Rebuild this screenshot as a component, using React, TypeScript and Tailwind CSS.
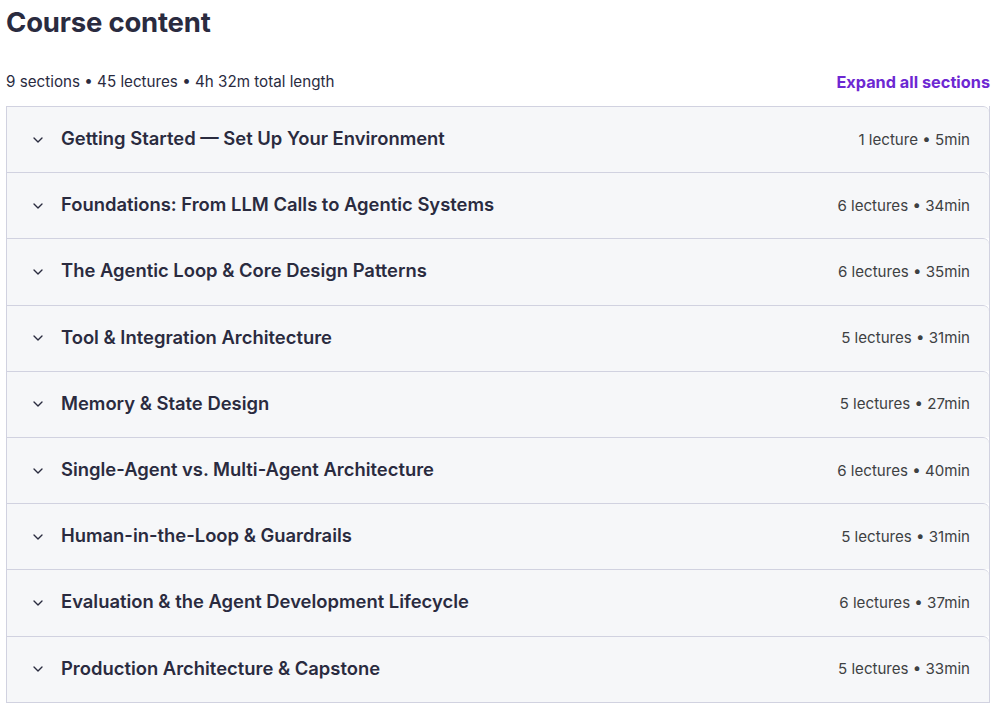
import { ChevronDown } from "lucide-react";

type Section = {
  title: string;
  lectures: number;
  minutes: number;
};

const SECTIONS: Section[] = [
  { title: "Getting Started — Set Up Your Environment", lectures: 1, minutes: 5 },
  { title: "Foundations: From LLM Calls to Agentic Systems", lectures: 6, minutes: 34 },
  { title: "The Agentic Loop & Core Design Patterns", lectures: 6, minutes: 35 },
  { title: "Tool & Integration Architecture", lectures: 5, minutes: 31 },
  { title: "Memory & State Design", lectures: 5, minutes: 27 },
  { title: "Single-Agent vs. Multi-Agent Architecture", lectures: 6, minutes: 40 },
  { title: "Human-in-the-Loop & Guardrails", lectures: 5, minutes: 31 },
  { title: "Evaluation & the Agent Development Lifecycle", lectures: 6, minutes: 37 },
  { title: "Production Architecture & Capstone", lectures: 5, minutes: 33 },
];

export default function App() {
  return (
    <div className="min-h-screen bg-white px-[6px] font-['Inter',sans-serif] text-[#2d2f31]">
      <h1 className="pt-[4px] text-[27.5px] font-bold leading-[36px] tracking-[-0.2px] text-[#2a2b3f]">
        Course content
      </h1>

      <div className="mt-[32px] flex items-end justify-between pb-[14px]">
        <p className="text-[15.2px] leading-[20px] text-[#2a2b3f]">
          9 sections • 45 lectures • 4h 32m total length
        </p>
        <button type="button" className="text-[16.3px] font-bold leading-[20px] text-[#6d28d2]">
          Expand all sections
        </button>
      </div>

      <div className="border-x border-b border-[#d1d2e0]">
        {SECTIONS.map((section) => (
          <button
            key={section.title}
            type="button"
            className="flex h-[66.2px] w-full items-center rounded-tr-[6px] border-t border-[#d1d2e0] bg-[#f6f7f9] pl-[23px] pr-[19px] text-left"
          >
            <ChevronDown className="h-[16px] w-[16px] text-[#2a2b3f]" strokeWidth={2} />
            <span className="ml-[15px] flex-1 pb-[3px] text-[18.4px] font-semibold leading-[24px] text-[#2a2b3f]">
              {section.title}
            </span>
            <span className="text-[15.1px] leading-[20px] text-[#3e4143]">
              {section.lectures} {section.lectures === 1 ? "lecture" : "lectures"} • {section.minutes}min
            </span>
          </button>
        ))}
      </div>
    </div>
  );
}
